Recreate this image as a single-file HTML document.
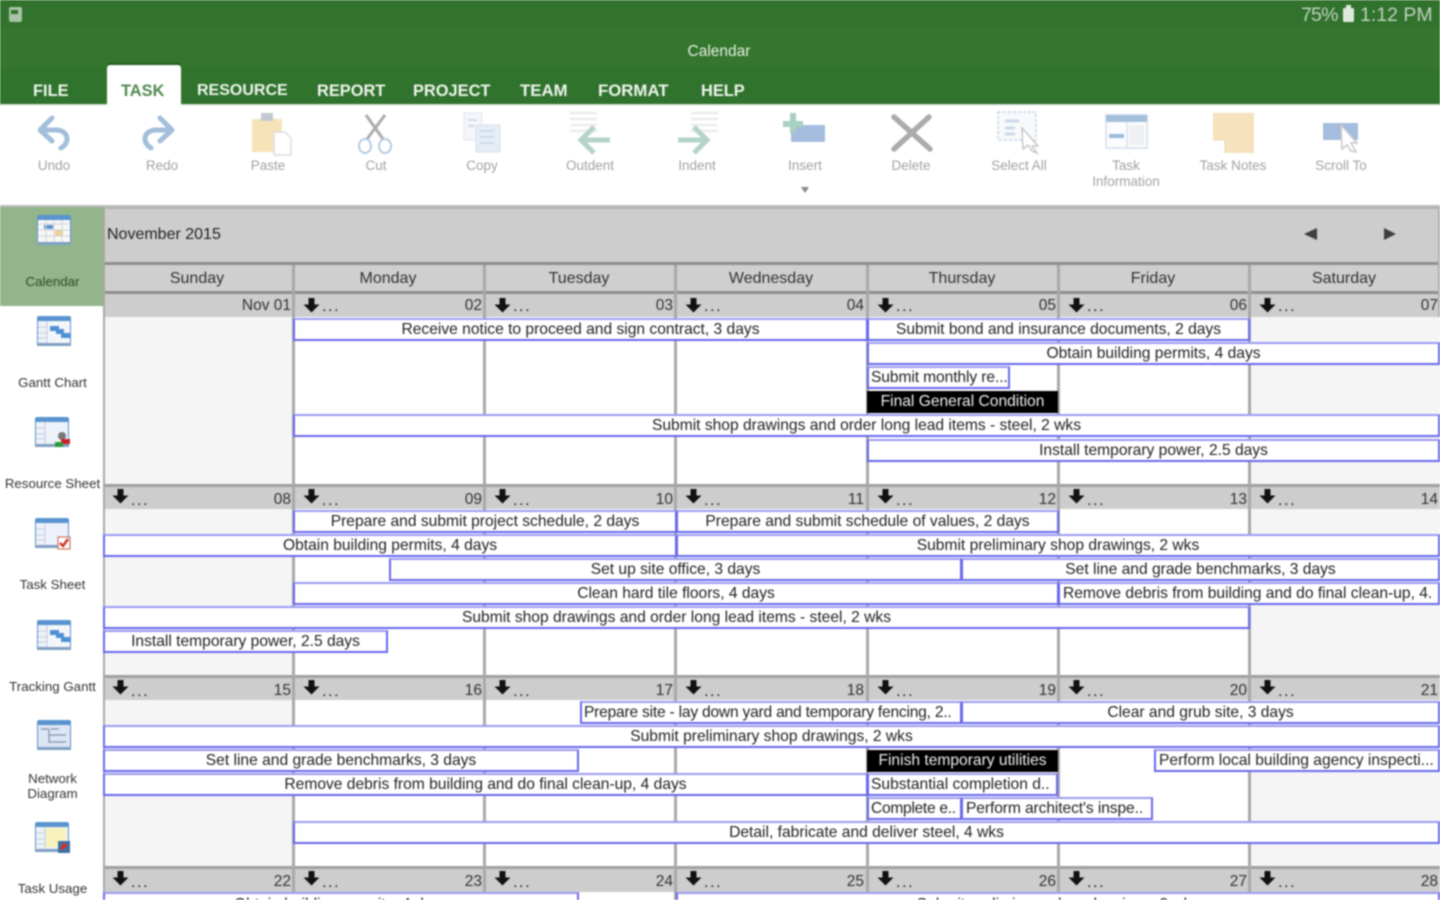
<!DOCTYPE html>
<html><head><meta charset="utf-8"><style>
html,body{margin:0;padding:0;width:1440px;height:900px;overflow:hidden;background:#fff}
#r{position:relative;width:1440px;height:900px;overflow:hidden;font-family:"Liberation Sans",sans-serif;filter:blur(.7px);background:#fff}
#r div,#r svg{position:absolute}
.t{white-space:nowrap;font-weight:bold;font-size:16.4px;color:#eef4ec;top:82px;line-height:18px}
.l{white-space:nowrap;font-size:13.5px;color:#a2a2a2;text-align:center;width:110px;top:158px;line-height:16px}
.s{white-space:nowrap;font-size:13.3px;color:#333;text-align:center;width:105px;left:0;line-height:15px}
.wd{top:266px;height:26px;line-height:26px;width:188px;text-align:center;font-size:16px;color:#333}
.v{width:3px;top:265px;height:635px;background:#a9a9a9}
.h{height:3px;left:103px;width:1337px;background:#8f8f8f}
.we{background:#f5f5f5}
.hd{left:105px;width:1335px;background:#cdcdcd}
.d{width:188px;height:22px;line-height:24px;font-size:15.5px;color:#333;text-align:right;white-space:nowrap}
.d span{position:absolute;left:28px;top:1px;color:#222;letter-spacing:1.6px;font-size:16px}
.c0{left:103px}.c1{left:294px}.c2{left:485px}.c3{left:676px}.c4{left:868px}.c5{left:1059px}.c6{left:1250px}
.w1{top:294px}.w2{top:488px}.w3{top:679px}.w4{top:870px}
.b{box-sizing:border-box;background:#fff;border:2px solid #6767ee;border-top-color:#9a9af4;height:23px;line-height:19px;font-size:15.6px;color:#222;text-align:center;white-space:nowrap;overflow:hidden}
.k{box-sizing:border-box;background:#000;height:22px;line-height:22px;font-size:15.6px;color:#eee;text-align:center;white-space:nowrap;overflow:hidden}
.lft{text-align:left;padding-left:2px}
</style></head><body><div id="r">

<svg width="0" height="0" style="left:0;top:0"><defs>
<symbol id="ar" viewBox="0 0 17 15"><path d="M5.500 0h6v6.500H16.500L8.500 14.500 .5 6.500h5z" fill="#111"/></symbol>
<symbol id="ic" viewBox="0 0 34 30"><rect x="0" y="0" width="34" height="30" rx="2" fill="#5a93cf"/><rect x="1" y="5" width="32" height="22" fill="#edf1f9"/><rect x="0" y="27" width="34" height="3" fill="#7f9fc2"/><path d="M1 11h9M1 17h9M1 22h9M10 5v22" stroke="#c6cfdc" stroke-width="1" fill="none"/></symbol>
</defs></svg>

<!-- top green -->
<div style="left:0;top:0;width:1440px;height:27px;background:#31722d"></div>
<div style="left:0;top:27px;width:1440px;height:40px;background:#34762e"></div>
<div style="left:0;top:67px;width:1440px;height:37px;background:#30732d"></div>
<div style="left:0;top:104px;width:1440px;height:1px;background:#c9d6c6"></div>
<div style="left:9px;top:7px;width:13px;height:15px;background:#a9c4a6;border-radius:2px"></div>
<div style="left:11px;top:10px;width:7px;height:4px;background:#2f702c"></div>
<div style="left:1301px;top:4px;font-size:19.500px;letter-spacing:-.8px;line-height:22px;color:#bfd2bc;white-space:nowrap">75%</div>
<div style="left:1343px;top:8px;width:11px;height:14px;background:#dfe8dd;border-radius:1px"></div>
<div style="left:1346px;top:5px;width:5px;height:3px;background:#dfe8dd"></div>
<div style="left:1360px;top:4px;font-size:19.500px;line-height:22px;color:#bfd2bc;white-space:nowrap">1:12 PM</div>
<div style="left:0;width:1438px;text-align:center;top:43px;font-size:15.500px;line-height:18px;color:#e6eee4">Calendar</div>

<div style="left:107px;top:63px;width:74px;height:3px;background:#225f22"></div>
<div style="left:107px;top:65px;width:74px;height:40px;background:#fff;border-radius:3px 3px 0 0"></div>
<div class="t" style="left:33px">FILE</div>
<div class="t" style="left:121px;color:#4f8a4d">TASK</div>
<div class="t" style="left:197px;font-size:16px">RESOURCE</div>
<div class="t" style="left:317px">REPORT</div>
<div class="t" style="left:413px">PROJECT</div>
<div class="t" style="left:520px;font-size:16.800px">TEAM</div>
<div class="t" style="left:598px;font-size:16.800px">FORMAT</div>
<div class="t" style="left:701px">HELP</div>

<!-- toolbar icons -->
<svg style="left:0;top:105px" width="1440" height="60" viewBox="0 105 1440 60">
<g fill="none" stroke="#a3bedb" stroke-width="5" stroke-linecap="round" stroke-linejoin="round">
<path d="M52 118 40 130 52 141M40 130H56C68 130 71 142 61 148"/>
<path d="M160 118 172 130 160 141M172 130H156C144 130 141 142 151 148"/>
</g>
<rect x="252" y="119" width="30" height="33" fill="#f6e3b8"/><rect x="261" y="113" width="12" height="8" fill="#c4c9d1"/>
<path d="M274 132h11l6 6v17h-17z" fill="#fff" stroke="#ddd" stroke-width="1.500"/>
<g stroke="#ababab" stroke-width="3" fill="none"><path d="M366 115 383 139M385 115 367 139"/></g>
<g stroke="#b4cbe3" stroke-width="2" fill="none"><ellipse cx="365" cy="146" rx="6" ry="7"/><ellipse cx="385" cy="146" rx="6" ry="7"/></g>
<rect x="464" y="113" width="18" height="27" fill="#f4f6fa" stroke="#e2e6ee"/><rect x="476" y="125" width="24" height="27" fill="#e6edf7" stroke="#d8dfea"/>
<path d="M480 131h14M480 137h14M480 143h14M468 120h9M468 126h6" stroke="#d0dae8" stroke-width="2"/>
<g stroke="#efefef" stroke-width="3"><path d="M570 113h27M570 119h27M570 125h27M570 131h27M691 113h27M691 119h27M691 125h27M691 131h27"/></g>
<g fill="none" stroke="#b4d3c9" stroke-width="5"><path d="M610 140H582M594 127 581 140 594 153M678 140H706M694 127 707 140 694 153"/></g>
<rect x="791" y="125" width="34" height="17" fill="#a4bcdd"/>
<path d="M793 113v20M783 124h20" stroke="#a8d0c0" stroke-width="6"/>
<path d="M894 117 930 149M929 117 894 149" stroke="#ababab" stroke-width="5.500" stroke-linecap="round" fill="none"/>
<rect x="998" y="112" width="38" height="28" fill="#f7f9fc" stroke="#c5d6ea" stroke-dasharray="3 2" stroke-width="1.500"/>
<path d="M1005 121h14M1005 128h10M1005 134h10" stroke="#cbd8e9" stroke-width="3"/>
<path d="M1022 128 1038 146H1032L1037 153 1032 151 1028 145 1023 149z" fill="#fff" stroke="#c8c8c8" stroke-width="1.500"/>
<rect x="1106" y="115" width="41" height="33" fill="#fbfcfe" stroke="#d5deeb" stroke-width="1.500"/><rect x="1106" y="115" width="41" height="7" fill="#a4bfdc"/>
<rect x="1109" y="134" width="15" height="4" fill="#9ebbdb"/><rect x="1129" y="125" width="15" height="20" fill="#eef0f3"/><path d="M1127 122v26" stroke="#cdd6e3"/>
<path d="M1213 113h41v40h-29l-12-13z" fill="#f6e2bc"/><path d="M1213 140h12v13" fill="#fff" stroke="#e7d9b8"/>
<rect x="1323" y="123" width="35" height="17" fill="#a4bcdd"/>
<path d="M1341 125 1357 143H1351L1356 152 1351 151 1347 145 1342 149z" fill="#fff" stroke="#c8c8c8" stroke-width="1.500"/>
</svg>

<div class="l" style="left:-1px">Undo</div>
<div class="l" style="left:107px">Redo</div>
<div class="l" style="left:213px">Paste</div>
<div class="l" style="left:321px">Cut</div>
<div class="l" style="left:427px">Copy</div>
<div class="l" style="left:535px">Outdent</div>
<div class="l" style="left:642px">Indent</div>
<div class="l" style="left:750px">Insert</div>
<div class="l" style="left:856px">Delete</div>
<div class="l" style="left:964px">Select All</div>
<div class="l" style="left:1071px">Task<br>Information</div>
<div class="l" style="left:1178px">Task Notes</div>
<div class="l" style="left:1286px">Scroll To</div>
<div style="left:801px;top:187px;width:0;height:0;border-left:4px solid transparent;border-right:4px solid transparent;border-top:6px solid #888"></div>

<div style="left:0;top:205px;width:1440px;height:2px;background:#bdbdbd"></div>

<!-- sidebar -->
<div style="left:0;top:207px;width:103px;height:99px;background:#93b58b"></div>
<svg style="left:37px;top:215px" width="34" height="30"><use href="#ic"/><rect x="1" y="5" width="32" height="22" fill="#f7f7f4"/><rect x="7" y="10" width="9" height="4" fill="#5d93cf"/><rect x="18" y="15" width="8" height="6" fill="#f1cf8e"/><path d="M1 9h32M1 15h32M1 21h32M9 5v22M17 5v22M25 5v22" stroke="#cfd5de" fill="none"/></svg>
<div class="s" style="top:274px;color:#2c4a28">Calendar</div>
<svg style="left:37px;top:316px" width="34" height="30"><use href="#ic"/><rect x="11" y="6" width="22" height="21" fill="#f4f6fb"/><path d="M13 10h9v3h5v4h6v5H24v-4h-5v-3h-6z" fill="#4f8fd6"/></svg>
<div class="s" style="top:375px">Gantt Chart</div>
<svg style="left:35px;top:417px" width="36" height="32"><use href="#ic" width="34" height="30"/><circle cx="27" cy="19" r="4" fill="#777"/><rect x="26" y="22" width="9" height="5" fill="#c22"/><rect x="20" y="25" width="8" height="5" fill="#2a9a3a"/></svg>
<div class="s" style="top:476px">Resource Sheet</div>
<svg style="left:35px;top:518px" width="36" height="32"><use href="#ic" width="34" height="30"/><rect x="23" y="19" width="12" height="12" fill="#fff" stroke="#c8604a"/><path d="M25 25l3 3 5-7" stroke="#d2332a" stroke-width="2.500" fill="none"/></svg>
<div class="s" style="top:577px">Task Sheet</div>
<svg style="left:37px;top:620px" width="34" height="30"><use href="#ic"/><rect x="11" y="6" width="22" height="21" fill="#f4f6fb"/><path d="M13 10h9v3h5v4h6v5H24v-4h-5v-3h-6z" fill="#4f8fd6"/></svg>
<div class="s" style="top:679px">Tracking Gantt</div>
<svg style="left:37px;top:720px" width="34" height="30"><use href="#ic"/><rect x="1" y="5" width="32" height="22" fill="#dde6f5"/><path d="M4 9h8M14 9h8M20 15h9M20 22h9M12 9v6h8M12 15v7h8" stroke="#8d9fb8" stroke-width="1.500" fill="none"/></svg>
<div class="s" style="top:771px">Network<br>Diagram</div>
<svg style="left:35px;top:822px" width="36" height="32"><use href="#ic" width="34" height="30"/><rect x="11" y="6" width="20" height="19" fill="#f8f2bb"/><rect x="23" y="19" width="12" height="12" fill="#3d6fa8"/><path d="M25 27l3-6 5 2-5 5z" fill="#d2332a"/></svg>
<div class="s" style="top:881px">Task Usage</div>

<!-- calendar backgrounds -->
<div style="left:103px;top:207px;width:1337px;height:58px;background:#cdcdcd"></div>
<div style="left:103px;top:207px;width:1337px;height:2px;background:#b2b2b2"></div>
<div style="left:103px;top:265px;width:1337px;height:26px;background:#cfcfcf"></div>
<div class="we" style="left:105px;top:317px;width:188px;height:583px"></div>
<div class="we" style="left:1251px;top:317px;width:189px;height:583px"></div>
<div class="hd" style="top:294px;height:23px"></div>
<div class="hd" style="top:487px;height:22px"></div>
<div class="hd" style="top:678px;height:22px"></div>
<div class="hd" style="top:869px;height:23px"></div>
<div class="h" style="top:262px"></div>
<div class="h" style="top:291px"></div>
<div class="h" style="top:484px;background:#a0a0a0"></div>
<div class="h" style="top:675px;background:#a0a0a0"></div>
<div class="h" style="top:866px;background:#a0a0a0"></div>
<div style="left:103px;top:207px;width:2px;height:693px;background:#a9a9a9"></div>
<div style="left:1438px;top:207px;width:2px;height:110px;background:#b0b0b0"></div>
<div class="v" style="left:292px"></div>
<div class="v" style="left:483px"></div>
<div class="v" style="left:674px"></div>
<div class="v" style="left:866px"></div>
<div class="v" style="left:1057px"></div>
<div class="v" style="left:1248px"></div>

<div style="left:107px;top:225px;font-size:16px;line-height:20px;color:#222;white-space:nowrap">November 2015</div>
<div style="left:1304px;top:228px;width:0;height:0;border-top:6px solid transparent;border-bottom:6px solid transparent;border-right:13px solid #3f3f3f"></div>
<div style="left:1384px;top:228px;width:0;height:0;border-top:6px solid transparent;border-bottom:6px solid transparent;border-left:12px solid #3f3f3f"></div>

<div class="wd" style="left:103px">Sunday</div>
<div class="wd" style="left:294px">Monday</div>
<div class="wd" style="left:485px">Tuesday</div>
<div class="wd" style="left:677px">Wednesday</div>
<div class="wd" style="left:868px">Thursday</div>
<div class="wd" style="left:1059px">Friday</div>
<div class="wd" style="left:1250px">Saturday</div>

<!-- day headers -->
<div class="d c0 w1">Nov 01</div>
<div class="d c1 w1"><svg style="left:9px;top:4px" width="17" height="15"><use href="#ar"/></svg><span>...</span>02</div>
<div class="d c2 w1"><svg style="left:9px;top:4px" width="17" height="15"><use href="#ar"/></svg><span>...</span>03</div>
<div class="d c3 w1"><svg style="left:9px;top:4px" width="17" height="15"><use href="#ar"/></svg><span>...</span>04</div>
<div class="d c4 w1"><svg style="left:9px;top:4px" width="17" height="15"><use href="#ar"/></svg><span>...</span>05</div>
<div class="d c5 w1"><svg style="left:9px;top:4px" width="17" height="15"><use href="#ar"/></svg><span>...</span>06</div>
<div class="d c6 w1"><svg style="left:9px;top:4px" width="17" height="15"><use href="#ar"/></svg><span>...</span>07</div>

<div class="d c0 w2"><svg style="left:9px;top:1px" width="17" height="15"><use href="#ar"/></svg><span>...</span>08</div>
<div class="d c1 w2"><svg style="left:9px;top:1px" width="17" height="15"><use href="#ar"/></svg><span>...</span>09</div>
<div class="d c2 w2"><svg style="left:9px;top:1px" width="17" height="15"><use href="#ar"/></svg><span>...</span>10</div>
<div class="d c3 w2"><svg style="left:9px;top:1px" width="17" height="15"><use href="#ar"/></svg><span>...</span>11</div>
<div class="d c4 w2"><svg style="left:9px;top:1px" width="17" height="15"><use href="#ar"/></svg><span>...</span>12</div>
<div class="d c5 w2"><svg style="left:9px;top:1px" width="17" height="15"><use href="#ar"/></svg><span>...</span>13</div>
<div class="d c6 w2"><svg style="left:9px;top:1px" width="17" height="15"><use href="#ar"/></svg><span>...</span>14</div>

<div class="d c0 w3"><svg style="left:9px;top:1px" width="17" height="15"><use href="#ar"/></svg><span>...</span>15</div>
<div class="d c1 w3"><svg style="left:9px;top:1px" width="17" height="15"><use href="#ar"/></svg><span>...</span>16</div>
<div class="d c2 w3"><svg style="left:9px;top:1px" width="17" height="15"><use href="#ar"/></svg><span>...</span>17</div>
<div class="d c3 w3"><svg style="left:9px;top:1px" width="17" height="15"><use href="#ar"/></svg><span>...</span>18</div>
<div class="d c4 w3"><svg style="left:9px;top:1px" width="17" height="15"><use href="#ar"/></svg><span>...</span>19</div>
<div class="d c5 w3"><svg style="left:9px;top:1px" width="17" height="15"><use href="#ar"/></svg><span>...</span>20</div>
<div class="d c6 w3"><svg style="left:9px;top:1px" width="17" height="15"><use href="#ar"/></svg><span>...</span>21</div>

<div class="d c0 w4"><svg style="left:9px;top:1px" width="17" height="15"><use href="#ar"/></svg><span>...</span>22</div>
<div class="d c1 w4"><svg style="left:9px;top:1px" width="17" height="15"><use href="#ar"/></svg><span>...</span>23</div>
<div class="d c2 w4"><svg style="left:9px;top:1px" width="17" height="15"><use href="#ar"/></svg><span>...</span>24</div>
<div class="d c3 w4"><svg style="left:9px;top:1px" width="17" height="15"><use href="#ar"/></svg><span>...</span>25</div>
<div class="d c4 w4"><svg style="left:9px;top:1px" width="17" height="15"><use href="#ar"/></svg><span>...</span>26</div>
<div class="d c5 w4"><svg style="left:9px;top:1px" width="17" height="15"><use href="#ar"/></svg><span>...</span>27</div>
<div class="d c6 w4"><svg style="left:9px;top:1px" width="17" height="15"><use href="#ar"/></svg><span>...</span>28</div>

<!-- week 1 bars -->
<div class="b" style="left:293px;top:318px;width:575px">Receive notice to proceed and sign contract, 3 days</div>
<div class="b" style="left:867px;top:318px;width:383px">Submit bond and insurance documents, 2 days</div>
<div class="b" style="left:867px;top:342px;width:573px">Obtain building permits, 4 days</div>
<div class="b lft" style="left:867px;top:366px;width:143px;letter-spacing:-.1px">Submit monthly re...</div>
<div class="k" style="left:867px;top:391px;width:191px">Final General Condition</div>
<div class="b" style="left:293px;top:414px;width:1147px">Submit shop drawings and order long lead items - steel, 2 wks</div>
<div class="b" style="left:867px;top:439px;width:573px">Install temporary power, 2.5 days</div>

<!-- week 2 bars -->
<div class="b" style="left:293px;top:510px;width:384px">Prepare and submit project schedule, 2 days</div>
<div class="b" style="left:676px;top:510px;width:383px">Prepare and submit schedule of values, 2 days</div>
<div class="b" style="left:103px;top:534px;width:574px">Obtain building permits, 4 days</div>
<div class="b" style="left:676px;top:534px;width:764px">Submit preliminary shop drawings, 2 wks</div>
<div class="b" style="left:389px;top:558px;width:573px">Set up site office, 3 days</div>
<div class="b" style="left:961px;top:558px;width:479px">Set line and grade benchmarks, 3 days</div>
<div class="b" style="left:293px;top:582px;width:766px">Clean hard tile floors, 4 days</div>
<div class="b lft" style="left:1058px;top:582px;width:382px;padding-left:3px">Remove debris from building and do final clean-up, 4.</div>
<div class="b" style="left:103px;top:606px;width:1147px">Submit shop drawings and order long lead items - steel, 2 wks</div>
<div class="b" style="left:103px;top:630px;width:285px">Install temporary power, 2.5 days</div>

<!-- week 3 bars -->
<div class="b lft" style="left:580px;top:701px;width:382px;letter-spacing:-.22px">Prepare site - lay down yard and temporary fencing, 2..</div>
<div class="b" style="left:961px;top:701px;width:479px">Clear and grub site, 3 days</div>
<div class="b" style="left:103px;top:725px;width:1337px">Submit preliminary shop drawings, 2 wks</div>
<div class="b" style="left:103px;top:749px;width:476px">Set line and grade benchmarks, 3 days</div>
<div class="k" style="left:867px;top:750px;width:191px">Finish temporary utilities</div>
<div class="b lft" style="left:1154px;top:749px;width:286px;padding-left:3px">Perform local building agency inspecti...</div>
<div class="b" style="left:103px;top:773px;width:765px">Remove debris from building and do final clean-up, 4 days</div>
<div class="b lft" style="left:867px;top:773px;width:191px">Substantial completion d..</div>
<div class="b lft" style="left:867px;top:797px;width:95px;letter-spacing:-.3px">Complete e..</div>
<div class="b lft" style="left:961px;top:797px;width:192px;padding-left:3px;letter-spacing:-.1px">Perform architect's inspe..</div>
<div class="b" style="left:293px;top:821px;width:1147px">Detail, fabricate and deliver steel, 4 wks</div>

<!-- week 4 bars -->
<div class="b" style="left:103px;top:892px;width:476px;line-height:21px">Obtain building permits, 4 days</div>
<div class="b" style="left:676px;top:892px;width:764px;line-height:21px">Submit preliminary shop drawings, 2 wks</div>

</div></body></html>
